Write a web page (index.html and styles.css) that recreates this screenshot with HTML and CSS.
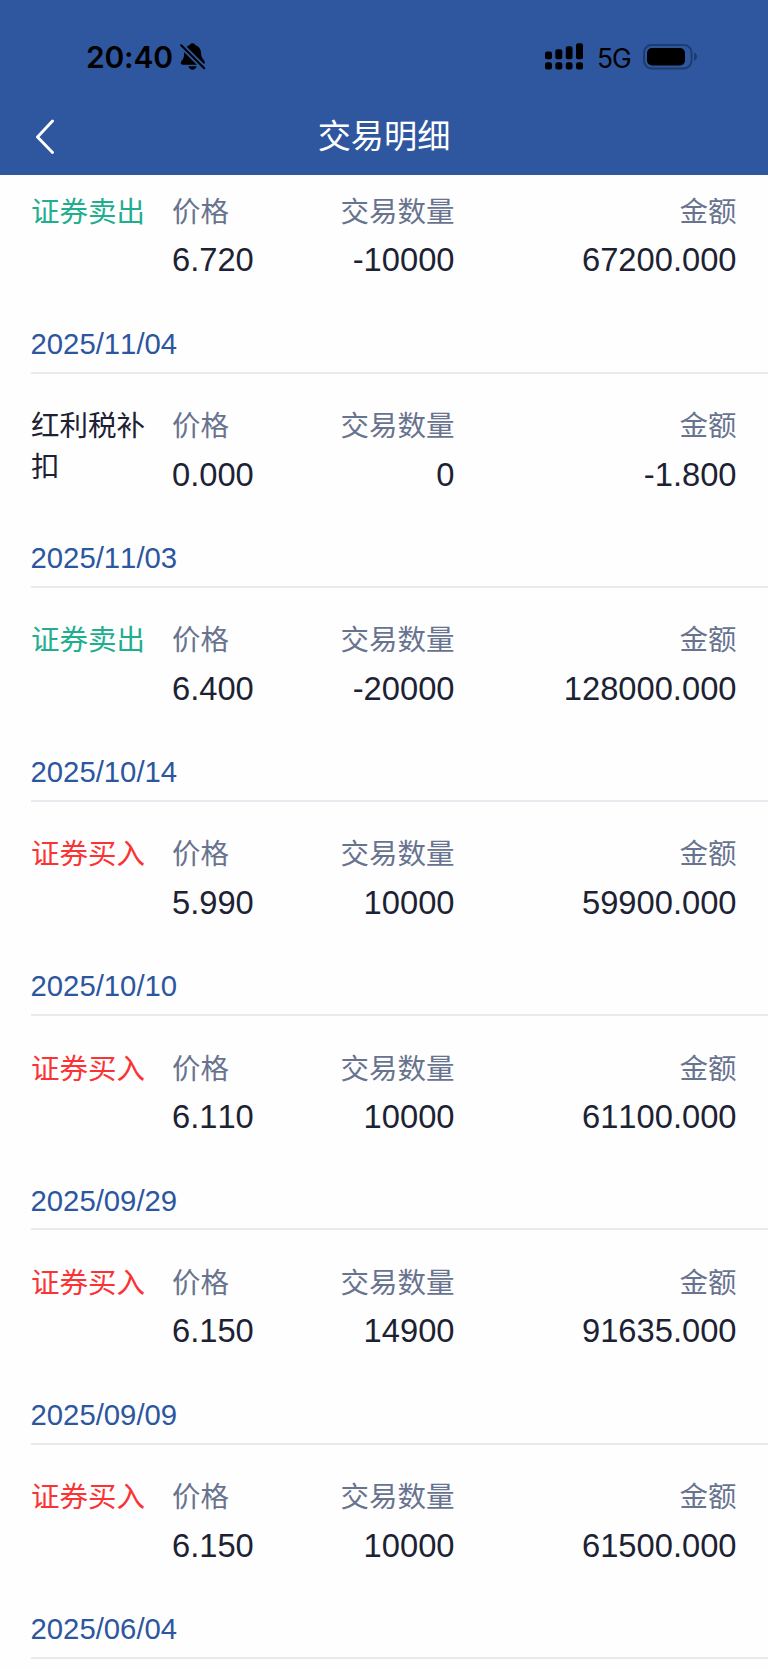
FILE: index.html
```html
<!DOCTYPE html>
<html lang="zh-CN">
<head>
<meta charset="utf-8">
<title>交易明细</title>
<link rel="stylesheet" href="styles.css">
</head>
<body>
<header class="header">
  <div class="status">
    <div class="status-left">
      <span class="time">20:40</span>
      <svg class="bell" width="26" height="28" viewBox="0 0 26 28">
        <path d="M5.5 5.3C7 3.2 8.3 2.6 9.6 2.3C10 1 11 .3 12.5.3S15 1 15.4 2.3C19 3.3 20.8 6 21 9.6C21.2 13 21.6 14.7 23.8 17C24.8 18 25 19 24.6 20.6L22.5 21.7H2.5C.6 21.7.2 19.5 1.5 18C3.8 15.3 4 14 4.1 10.5C4.2 8.3 4.6 6.6 5.5 5.3ZM8.5 23.3H16.6C16 25.6 14.6 26.8 12.5 26.8S9 25.6 8.5 23.3Z"/>
        <path class="bell-gap" d="M0 1L25 26"/>
        <path class="bell-slash" d="M1.2 2.2L24.2 25.2"/>
      </svg>
    </div>
    <div class="status-right">
      <svg class="signal" width="39" height="28" viewBox="0 0 39 28">
        <rect x="0" y="8.5" width="7" height="7.8" rx="2"/>
        <rect x="10.3" y="6.2" width="7" height="10.1" rx="2"/>
        <rect x="20.8" y="3.2" width="6.7" height="13.1" rx="2"/>
        <rect x="31" y="0.2" width="7" height="16.1" rx="2"/>
        <rect x="0" y="19.3" width="7" height="7.2" rx="2.3"/>
        <rect x="10.3" y="19.3" width="7" height="7.2" rx="2.3"/>
        <rect x="20.8" y="19.3" width="6.7" height="7.2" rx="2.3"/>
        <rect x="31" y="19.3" width="7" height="7.2" rx="2.3"/>
      </svg>
      <span class="network">5G</span>
      <svg class="battery" width="55" height="26" viewBox="0 0 55 26">
        <rect class="shell" x="1" y="1" width="47.5" height="23.5" rx="7.5"/>
        <rect x="4" y="4" width="38" height="17.5" rx="5"/>
        <path class="cap" d="M51 8.5C53 9.3 54 10.8 54 12.7S53 16.2 51 17Z"/>
      </svg>
    </div>
  </div>
  <nav class="nav">
    <svg class="back" width="20" height="36" viewBox="0 0 20 36"><path d="M17.5 2L2.5 18L17.5 33.5"/></svg>
    <h1 class="title">交易明细</h1>
  </nav>
</header>
<main class="list">
  <section class="entry">
    <div class="row"><div class="kind sell">证券卖出</div>
      <div class="cell price"><span class="label">价格</span><span class="value">6.720</span></div>
      <div class="cell count"><span class="label">交易数量</span><span class="value">-10000</span></div>
      <div class="cell amount"><span class="label">金额</span><span class="value">67200.000</span></div></div>
    <time class="date">2025/11/04</time>
  </section>
  <section class="entry">
    <div class="row"><div class="kind">红利税补扣</div>
      <div class="cell price"><span class="label">价格</span><span class="value">0.000</span></div>
      <div class="cell count"><span class="label">交易数量</span><span class="value">0</span></div>
      <div class="cell amount"><span class="label">金额</span><span class="value">-1.800</span></div></div>
    <time class="date">2025/11/03</time>
  </section>
  <section class="entry">
    <div class="row"><div class="kind sell">证券卖出</div>
      <div class="cell price"><span class="label">价格</span><span class="value">6.400</span></div>
      <div class="cell count"><span class="label">交易数量</span><span class="value">-20000</span></div>
      <div class="cell amount"><span class="label">金额</span><span class="value">128000.000</span></div></div>
    <time class="date">2025/10/14</time>
  </section>
  <section class="entry">
    <div class="row"><div class="kind buy">证券买入</div>
      <div class="cell price"><span class="label">价格</span><span class="value">5.990</span></div>
      <div class="cell count"><span class="label">交易数量</span><span class="value">10000</span></div>
      <div class="cell amount"><span class="label">金额</span><span class="value">59900.000</span></div></div>
    <time class="date">2025/10/10</time>
  </section>
  <section class="entry">
    <div class="row"><div class="kind buy">证券买入</div>
      <div class="cell price"><span class="label">价格</span><span class="value">6.110</span></div>
      <div class="cell count"><span class="label">交易数量</span><span class="value">10000</span></div>
      <div class="cell amount"><span class="label">金额</span><span class="value">61100.000</span></div></div>
    <time class="date">2025/09/29</time>
  </section>
  <section class="entry">
    <div class="row"><div class="kind buy">证券买入</div>
      <div class="cell price"><span class="label">价格</span><span class="value">6.150</span></div>
      <div class="cell count"><span class="label">交易数量</span><span class="value">14900</span></div>
      <div class="cell amount"><span class="label">金额</span><span class="value">91635.000</span></div></div>
    <time class="date">2025/09/09</time>
  </section>
  <section class="entry">
    <div class="row"><div class="kind buy">证券买入</div>
      <div class="cell price"><span class="label">价格</span><span class="value">6.150</span></div>
      <div class="cell count"><span class="label">交易数量</span><span class="value">10000</span></div>
      <div class="cell amount"><span class="label">金额</span><span class="value">61500.000</span></div></div>
    <time class="date">2025/06/04</time>
  </section>
</main>
</body>
</html>
```
FILE: styles.css
```css
* { box-sizing: border-box; }
body {
  margin: 0;
  height: 1669px;
  overflow: hidden;
  background: #fefefe;
  color: #1c2233;
  font-family: "Liberation Sans", "Noto Sans CJK SC", sans-serif;
  font-kerning: none;
}
.header { height: 175px; background: #2f579f; }
.status {
  display: flex;
  justify-content: space-between;
  height: 100px;
  padding: 37px 70px 0 86px;
  color: #000;
  font-family: Inter, sans-serif;
}
.status-left, .status-right { display: flex; align-items: center; height: 40px; }
.time { font-size: 30px; font-weight: 600; letter-spacing: -0.2px; line-height: 40px; }
.bell { margin-left: 7px; }
.bell-gap { stroke: #2f579f; stroke-width: 5.5; }
.bell-slash { stroke: #000; stroke-width: 2; stroke-linecap: round; }
.signal { margin-right: 13px; }
.network { width: 33px; margin-right: 13px; padding-top: 1px; font-size: 26.4px; letter-spacing: -1px; line-height: 40px; white-space: nowrap; }
.shell { fill: none; stroke: #203c6e; stroke-width: 2; }
.cap { fill: #203c6e; }
.nav {
  display: grid;
  grid-template-columns: 100px 1fr 100px;
  align-items: center;
  height: 75px;
  padding-bottom: 1px;
}
.back { margin-left: 35px; fill: none; stroke: #fff; stroke-width: 2.9; stroke-linecap: round; stroke-linejoin: round; }
.title { margin: 0; color: #fff; font-size: 33.2px; font-weight: 400; line-height: 50px; text-align: center; }
.list { padding-left: 31px; }
.entry {
  display: flex;
  flex-direction: column;
  height: 214.2px;
  padding-top: 32.5px;
  border-bottom: 2px solid #e9eaf0;
}
.entry:first-child { height: 198.6px; padding-top: 16.9px; }
.row { display: grid; grid-template-columns: 141px 140px 142.5px 1fr; height: 132px; padding-right: 31.5px; }
.kind { width: 116px; font-size: 28.5px; line-height: 41px; }
.sell { color: #20ae8e; }
.buy { color: #fa3434; }
.cell { display: flex; flex-direction: column; gap: 8.5px; text-align: right; }
.price { text-align: left; }
.label { color: #68738f; font-size: 28.5px; line-height: 40px; }
.value { font-size: 32.7px; line-height: 40px; }
.date { margin-left: -0.5px; color: #2c56a0; font-size: 29.3px; line-height: 40px; }
```
